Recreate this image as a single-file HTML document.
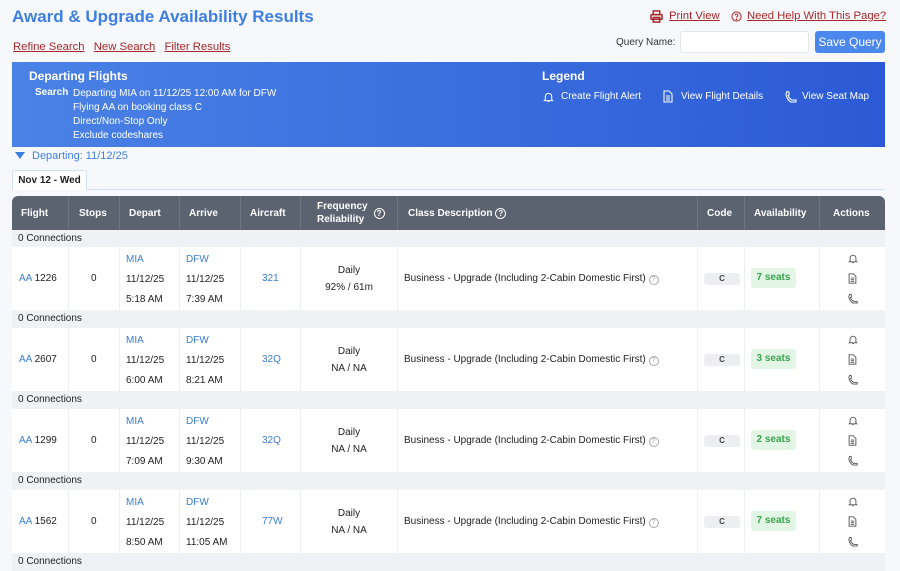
<!DOCTYPE html>
<html><head><meta charset="utf-8"><style>
*{box-sizing:border-box;margin:0;padding:0}
body{width:900px;height:568px;overflow:hidden;background:#f6f8fb;font-family:"Liberation Sans",Arial,sans-serif;font-size:11px;color:#222;position:relative}
.a{position:absolute;white-space:nowrap}
h1{position:absolute;left:12px;top:7px;font-size:17px;color:#3d7fe0;font-weight:bold}
.rl{color:#a8282a;text-decoration:underline;font-size:11.3px}
.banner{position:absolute;left:12px;top:62px;width:873px;height:85px;background:linear-gradient(90deg,#4a82e6,#2c5ad6);color:#fff}
.hdr{position:absolute;left:12px;top:196px;width:873px;height:34px;background:#5b6270;border-radius:6px 6px 0 0}
.hdr>div{position:absolute;top:0;height:34px;display:flex;align-items:center;color:#fff;font-weight:bold;font-size:10px;border-right:1px solid #6e7583}
.q{display:inline-block;width:11px;height:11px;border:1px solid #fff;border-radius:50%;font-size:8px;text-align:center;line-height:9px}
.conn{position:absolute;left:12px;width:873px;height:18px;background:#eff1f4;padding:3px 6px;font-size:10px}
.row{position:absolute;left:12px;width:873px;height:63px;background:#fff}
.row .c{position:absolute;top:0;height:63px;border-right:1px solid #eceef1;font-size:10px}
.blue{color:#3a7dd0}
.code{position:absolute;left:6px;top:26px;width:36px;height:12px;background:#eceef1;border-radius:3px;font-size:8px;font-weight:bold;text-align:center;line-height:12px;color:#444}
.seat{position:absolute;left:6px;top:21px;width:45px;height:20px;background:#e3f6e6;border-radius:3px;color:#3aa34d;font-weight:bold;font-size:10px;text-align:center;line-height:20px}
.ic{position:absolute;left:28px}
</style></head><body>
<h1>Award &amp; Upgrade Availability Results</h1>
<div class="a" style="left:13px;top:41px"><span class="rl">Refine Search</span>&nbsp;&nbsp;&nbsp;<span class="rl">New Search</span>&nbsp;&nbsp;&nbsp;<span class="rl">Filter Results</span></div>
<svg class="a" style="left:650px;top:10px" width="13" height="13" viewBox="0 0 14 14" fill="none" stroke="#a8282a" stroke-width="1.6"><rect x="3.5" y="1" width="7" height="4"/><rect x="1" y="5" width="12" height="5" rx="1"/><rect x="3.5" y="8" width="7" height="5"/></svg>
<div class="a rl" style="left:669px;top:10px">Print View</div>
<svg class="a" style="left:731px;top:11px" width="11" height="11" viewBox="0 0 12 12" fill="none" stroke="#a8282a" stroke-width="1.1"><circle cx="6" cy="6" r="5"/><path d="M4.5 4.8a1.5 1.5 0 1 1 2 1.4c-.4.2-.5.5-.5.9"/><circle cx="6" cy="9" r=".4" fill="#a8282a"/></svg>
<div class="a rl" style="left:747px;top:10px">Need Help With This Page?</div>
<div class="a" style="left:616px;top:37px;font-size:10px;color:#333">Query Name:</div>
<div class="a" style="left:680px;top:31px;width:129px;height:22px;background:#fff;border:1px solid #e4e6ea;border-radius:3px"></div>
<div class="a" style="left:815px;top:31px;width:70px;height:22px;background:#4a88ee;border-radius:3px;color:#fff;font-size:12px;text-align:center;line-height:22px">Save Query</div>
<div class="banner">
<div class="a" style="left:17px;top:7px;font-size:12px;font-weight:bold">Departing Flights</div>
<div class="a" style="left:23px;top:25px;font-weight:bold;font-size:10px">Search</div>
<div class="a" style="left:61px;top:25px;font-size:10px;line-height:14px">Departing MIA on 11/12/25 12:00 AM for DFW<br>Flying AA on booking class C<br>Direct/Non-Stop Only<br>Exclude codeshares</div>
<div class="a" style="left:530px;top:7px;font-size:12px;font-weight:bold">Legend</div>
<svg class="a" style="left:531px;top:29px" width="11" height="12" viewBox="0 0 12 13" fill="none" stroke="#fff" stroke-width="1.1"><path d="M2.5 9.5V6a3.5 3.5 0 0 1 7 0v3.5l1 1h-9z"/><path d="M5 11.5h2"/></svg>
<div class="a" style="left:549px;top:29px;font-size:10px">Create Flight Alert</div>
<svg class="a" style="left:651px;top:28px" width="10" height="13" viewBox="0 0 10 13" fill="none" stroke="#fff" stroke-width="1.1"><path d="M1 1h5l3 3v8H1z"/><path d="M3 6h4M3 8h4M3 10h4"/></svg>
<div class="a" style="left:669px;top:29px;font-size:10px">View Flight Details</div>
<svg class="a" style="left:773px;top:28px" width="12" height="13" viewBox="0 0 12 13" fill="none" stroke="#fff" stroke-width="1.1"><path d="M2 1.5l2 .5 0 3-1 .5c.5 2 2 3.5 4 4.5h4v2H6C3.5 11 1 7 1 4z"/></svg>
<div class="a" style="left:790px;top:29px;font-size:10px">View Seat Map</div>
</div>
<div class="a" style="left:15px;top:152px;width:0;height:0;border-left:5px solid transparent;border-right:5px solid transparent;border-top:7px solid #3d7fe0"></div>
<div class="a" style="left:32px;top:150px;font-size:11px;color:#3d7fe0">Departing: 11/12/25</div>
<div class="a" style="left:12px;top:170px;width:75px;height:20px;background:#fff;border:1px solid #cfe0f6;border-bottom:none;border-radius:3px 3px 0 0;font-weight:bold;font-size:10px;text-align:center;line-height:20px">Nov 12 - Wed</div>
<div class="a" style="left:87px;top:189px;width:798px;height:1px;background:#cfe0f6"></div>
<div class="hdr">
<div style="left:0;width:57px;padding-left:9px">Flight</div>
<div style="left:57px;width:51px;padding-left:10px">Stops</div>
<div style="left:108px;width:60px;padding-left:9px">Depart</div>
<div style="left:168px;width:61px;padding-left:9px">Arrive</div>
<div style="left:229px;width:60px;padding-left:9px">Aircraft</div>
<div style="left:289px;width:97px;padding-left:16px"><span style="line-height:13px">Frequency<br>Reliability</span><span class="q" style="margin-left:6px">?</span></div>
<div style="left:386px;width:300px;padding-left:10px">Class Description&nbsp;<span class="q">?</span></div>
<div style="left:686px;width:47px;padding-left:9px">Code</div>
<div style="left:733px;width:75px;padding-left:9px">Availability</div>
<div style="left:808px;width:65px;padding-left:13px;border:none">Actions</div>
</div>

<div class="conn" style="top:230px">0 Connections</div>
<div class="row" style="top:247px">
<div class="c" style="left:0;width:57px"><span class="a" style="left:7px;top:26px"><span class="blue">AA</span> 1226</span></div>
<div class="c" style="left:57px;width:51px"><span class="a" style="left:22px;top:26px">0</span></div>
<div class="c" style="left:108px;width:60px"><span class="a" style="left:6px;top:3px;line-height:20px"><span class="blue">MIA</span><br>11/12/25<br>5:18 AM</span></div>
<div class="c" style="left:168px;width:61px"><span class="a" style="left:6px;top:3px;line-height:20px"><span class="blue">DFW</span><br>11/12/25<br>7:39 AM</span></div>
<div class="c" style="left:229px;width:60px"><span class="a blue" style="left:21px;top:26px">321</span></div>
<div class="c" style="left:289px;width:97px;text-align:center"><span style="display:block;margin-top:15px;line-height:17px">Daily<br>92% / 61m</span></div>
<div class="c" style="left:386px;width:300px"><span class="a" style="left:6px;top:26px">Business - Upgrade (Including 2-Cabin Domestic First) <span style="display:inline-block;width:10px;height:10px;border:1px solid #aaa;border-radius:50%;font-size:7px;color:#aaa;text-align:center;line-height:8px">?</span></span></div>
<div class="c" style="left:686px;width:47px"><div class="code">C</div></div>
<div class="c" style="left:733px;width:75px"><div class="seat">7 seats</div></div>
<div class="c" style="left:808px;width:65px;border:none">
<svg class="ic" style="top:6px" width="10" height="11" viewBox="0 0 12 13" fill="none" stroke="#555" stroke-width="1.1"><path d="M2.5 9.5V6a3.5 3.5 0 0 1 7 0v3.5l1 1h-9z"/><path d="M5 11.5h2"/></svg>
<svg class="ic" style="top:26px" width="9" height="11" viewBox="0 0 10 13" fill="none" stroke="#555" stroke-width="1.1"><path d="M1 1h5l3 3v8H1z"/><path d="M3 6h4M3 8h4M3 10h4"/></svg>
<svg class="ic" style="top:46px" width="10" height="11" viewBox="0 0 12 13" fill="none" stroke="#555" stroke-width="1.1"><path d="M2 1.5l2 .5 0 3-1 .5c.5 2 2 3.5 4 4.5h4v2H6C3.5 11 1 7 1 4z"/></svg>
</div></div>

<div class="conn" style="top:310px">0 Connections</div>
<div class="row" style="top:328px">
<div class="c" style="left:0;width:57px"><span class="a" style="left:7px;top:26px"><span class="blue">AA</span> 2607</span></div>
<div class="c" style="left:57px;width:51px"><span class="a" style="left:22px;top:26px">0</span></div>
<div class="c" style="left:108px;width:60px"><span class="a" style="left:6px;top:3px;line-height:20px"><span class="blue">MIA</span><br>11/12/25<br>6:00 AM</span></div>
<div class="c" style="left:168px;width:61px"><span class="a" style="left:6px;top:3px;line-height:20px"><span class="blue">DFW</span><br>11/12/25<br>8:21 AM</span></div>
<div class="c" style="left:229px;width:60px"><span class="a blue" style="left:21px;top:26px">32Q</span></div>
<div class="c" style="left:289px;width:97px;text-align:center"><span style="display:block;margin-top:15px;line-height:17px">Daily<br>NA / NA</span></div>
<div class="c" style="left:386px;width:300px"><span class="a" style="left:6px;top:26px">Business - Upgrade (Including 2-Cabin Domestic First) <span style="display:inline-block;width:10px;height:10px;border:1px solid #aaa;border-radius:50%;font-size:7px;color:#aaa;text-align:center;line-height:8px">?</span></span></div>
<div class="c" style="left:686px;width:47px"><div class="code">C</div></div>
<div class="c" style="left:733px;width:75px"><div class="seat">3 seats</div></div>
<div class="c" style="left:808px;width:65px;border:none">
<svg class="ic" style="top:6px" width="10" height="11" viewBox="0 0 12 13" fill="none" stroke="#555" stroke-width="1.1"><path d="M2.5 9.5V6a3.5 3.5 0 0 1 7 0v3.5l1 1h-9z"/><path d="M5 11.5h2"/></svg>
<svg class="ic" style="top:26px" width="9" height="11" viewBox="0 0 10 13" fill="none" stroke="#555" stroke-width="1.1"><path d="M1 1h5l3 3v8H1z"/><path d="M3 6h4M3 8h4M3 10h4"/></svg>
<svg class="ic" style="top:46px" width="10" height="11" viewBox="0 0 12 13" fill="none" stroke="#555" stroke-width="1.1"><path d="M2 1.5l2 .5 0 3-1 .5c.5 2 2 3.5 4 4.5h4v2H6C3.5 11 1 7 1 4z"/></svg>
</div></div>

<div class="conn" style="top:391px">0 Connections</div>
<div class="row" style="top:409px">
<div class="c" style="left:0;width:57px"><span class="a" style="left:7px;top:26px"><span class="blue">AA</span> 1299</span></div>
<div class="c" style="left:57px;width:51px"><span class="a" style="left:22px;top:26px">0</span></div>
<div class="c" style="left:108px;width:60px"><span class="a" style="left:6px;top:3px;line-height:20px"><span class="blue">MIA</span><br>11/12/25<br>7:09 AM</span></div>
<div class="c" style="left:168px;width:61px"><span class="a" style="left:6px;top:3px;line-height:20px"><span class="blue">DFW</span><br>11/12/25<br>9:30 AM</span></div>
<div class="c" style="left:229px;width:60px"><span class="a blue" style="left:21px;top:26px">32Q</span></div>
<div class="c" style="left:289px;width:97px;text-align:center"><span style="display:block;margin-top:15px;line-height:17px">Daily<br>NA / NA</span></div>
<div class="c" style="left:386px;width:300px"><span class="a" style="left:6px;top:26px">Business - Upgrade (Including 2-Cabin Domestic First) <span style="display:inline-block;width:10px;height:10px;border:1px solid #aaa;border-radius:50%;font-size:7px;color:#aaa;text-align:center;line-height:8px">?</span></span></div>
<div class="c" style="left:686px;width:47px"><div class="code">C</div></div>
<div class="c" style="left:733px;width:75px"><div class="seat">2 seats</div></div>
<div class="c" style="left:808px;width:65px;border:none">
<svg class="ic" style="top:6px" width="10" height="11" viewBox="0 0 12 13" fill="none" stroke="#555" stroke-width="1.1"><path d="M2.5 9.5V6a3.5 3.5 0 0 1 7 0v3.5l1 1h-9z"/><path d="M5 11.5h2"/></svg>
<svg class="ic" style="top:26px" width="9" height="11" viewBox="0 0 10 13" fill="none" stroke="#555" stroke-width="1.1"><path d="M1 1h5l3 3v8H1z"/><path d="M3 6h4M3 8h4M3 10h4"/></svg>
<svg class="ic" style="top:46px" width="10" height="11" viewBox="0 0 12 13" fill="none" stroke="#555" stroke-width="1.1"><path d="M2 1.5l2 .5 0 3-1 .5c.5 2 2 3.5 4 4.5h4v2H6C3.5 11 1 7 1 4z"/></svg>
</div></div>

<div class="conn" style="top:472px">0 Connections</div>
<div class="row" style="top:490px">
<div class="c" style="left:0;width:57px"><span class="a" style="left:7px;top:26px"><span class="blue">AA</span> 1562</span></div>
<div class="c" style="left:57px;width:51px"><span class="a" style="left:22px;top:26px">0</span></div>
<div class="c" style="left:108px;width:60px"><span class="a" style="left:6px;top:3px;line-height:20px"><span class="blue">MIA</span><br>11/12/25<br>8:50 AM</span></div>
<div class="c" style="left:168px;width:61px"><span class="a" style="left:6px;top:3px;line-height:20px"><span class="blue">DFW</span><br>11/12/25<br>11:05 AM</span></div>
<div class="c" style="left:229px;width:60px"><span class="a blue" style="left:21px;top:26px">77W</span></div>
<div class="c" style="left:289px;width:97px;text-align:center"><span style="display:block;margin-top:15px;line-height:17px">Daily<br>NA / NA</span></div>
<div class="c" style="left:386px;width:300px"><span class="a" style="left:6px;top:26px">Business - Upgrade (Including 2-Cabin Domestic First) <span style="display:inline-block;width:10px;height:10px;border:1px solid #aaa;border-radius:50%;font-size:7px;color:#aaa;text-align:center;line-height:8px">?</span></span></div>
<div class="c" style="left:686px;width:47px"><div class="code">C</div></div>
<div class="c" style="left:733px;width:75px"><div class="seat">7 seats</div></div>
<div class="c" style="left:808px;width:65px;border:none">
<svg class="ic" style="top:6px" width="10" height="11" viewBox="0 0 12 13" fill="none" stroke="#555" stroke-width="1.1"><path d="M2.5 9.5V6a3.5 3.5 0 0 1 7 0v3.5l1 1h-9z"/><path d="M5 11.5h2"/></svg>
<svg class="ic" style="top:26px" width="9" height="11" viewBox="0 0 10 13" fill="none" stroke="#555" stroke-width="1.1"><path d="M1 1h5l3 3v8H1z"/><path d="M3 6h4M3 8h4M3 10h4"/></svg>
<svg class="ic" style="top:46px" width="10" height="11" viewBox="0 0 12 13" fill="none" stroke="#555" stroke-width="1.1"><path d="M2 1.5l2 .5 0 3-1 .5c.5 2 2 3.5 4 4.5h4v2H6C3.5 11 1 7 1 4z"/></svg>
</div></div>
<div class="conn" style="top:553px">0 Connections</div>
</body></html>
